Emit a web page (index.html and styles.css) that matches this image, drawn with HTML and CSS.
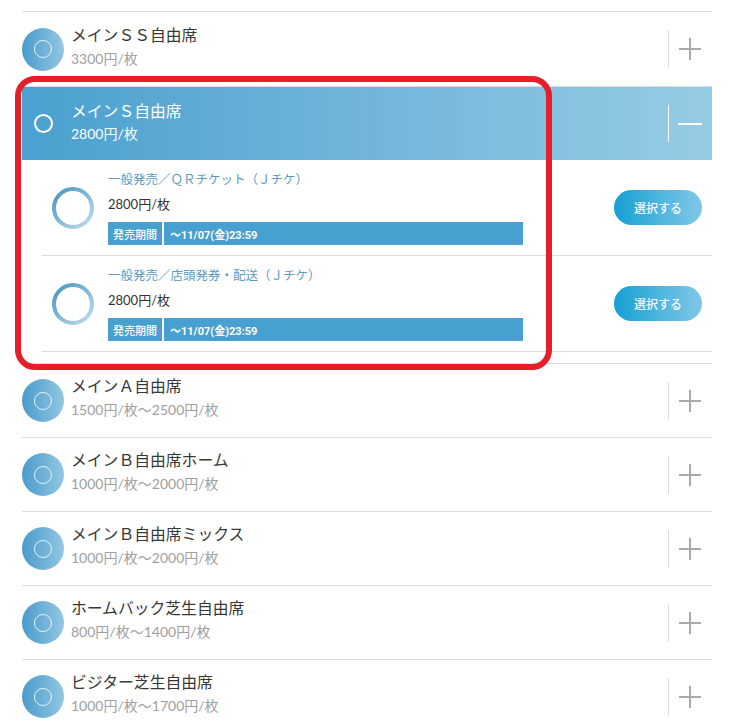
FILE: index.html
```html
<!DOCTYPE html>
<html lang="ja">
<head>
<meta charset="utf-8">
<link rel="stylesheet" href="styles.css">
</head>
<body>
<div class="list">
  <div class="row first">
    <div class="badge"><span class="badge-ring"></span></div>
    <div class="info"><div class="name">メインＳＳ自由席</div><div class="price">3300円/枚</div></div>
    <div class="toggle"><span class="sep"></span><svg class="icon" width="24" height="24" viewBox="0 0 24 24"><path d="M12 1v22M1 12h22" stroke="#a9a9a9" stroke-width="2" fill="none"/></svg></div>
  </div>

  <div class="group">
    <div class="group-head">
      <div class="badge open"><span class="badge-ring"></span></div>
      <div class="info"><div class="name">メインＳ自由席</div><div class="price">2800円/枚</div></div>
      <div class="toggle"><span class="sep"></span><svg class="icon" width="24" height="24" viewBox="0 0 24 24"><path d="M0 12h24" stroke="#ffffff" stroke-width="2" fill="none"/></svg></div>
    </div>
    <div class="tickets">
      <div class="ticket">
        <svg class="ring" width="42" height="42" viewBox="0 0 42 42"><defs><linearGradient id="rg1" x1="0" y1="0" x2="1" y2="1"><stop offset="0" stop-color="#4793c0"/><stop offset="1" stop-color="#c0deee"/></linearGradient></defs><circle cx="21" cy="21" r="19" fill="none" stroke="url(#rg1)" stroke-width="4"/></svg>
        <div class="t-info">
          <div class="t-name">一般発売／ＱＲチケット（Ｊチケ）</div>
          <div class="t-price">2800円/枚</div>
          <div class="period"><span class="p-label">発売期間</span><span class="p-value">〜11/07(金)23:59</span></div>
        </div>
        <button class="select">選択する</button>
      </div>
      <div class="ticket">
        <svg class="ring" width="42" height="42" viewBox="0 0 42 42"><defs><linearGradient id="rg2" x1="0" y1="0" x2="1" y2="1"><stop offset="0" stop-color="#4793c0"/><stop offset="1" stop-color="#c0deee"/></linearGradient></defs><circle cx="21" cy="21" r="19" fill="none" stroke="url(#rg2)" stroke-width="4"/></svg>
        <div class="t-info">
          <div class="t-name">一般発売／店頭発券・配送（Ｊチケ）</div>
          <div class="t-price">2800円/枚</div>
          <div class="period"><span class="p-label">発売期間</span><span class="p-value">〜11/07(金)23:59</span></div>
        </div>
        <button class="select">選択する</button>
      </div>
    </div>
  </div>

  <div class="row">
    <div class="badge"><span class="badge-ring"></span></div>
    <div class="info"><div class="name">メインＡ自由席</div><div class="price">1500円/枚～2500円/枚</div></div>
    <div class="toggle"><span class="sep"></span><svg class="icon" width="24" height="24" viewBox="0 0 24 24"><path d="M12 1v22M1 12h22" stroke="#a9a9a9" stroke-width="2" fill="none"/></svg></div>
  </div>
  <div class="row">
    <div class="badge"><span class="badge-ring"></span></div>
    <div class="info"><div class="name">メインＢ自由席ホーム</div><div class="price">1000円/枚～2000円/枚</div></div>
    <div class="toggle"><span class="sep"></span><svg class="icon" width="24" height="24" viewBox="0 0 24 24"><path d="M12 1v22M1 12h22" stroke="#a9a9a9" stroke-width="2" fill="none"/></svg></div>
  </div>
  <div class="row">
    <div class="badge"><span class="badge-ring"></span></div>
    <div class="info"><div class="name">メインＢ自由席ミックス</div><div class="price">1000円/枚～2000円/枚</div></div>
    <div class="toggle"><span class="sep"></span><svg class="icon" width="24" height="24" viewBox="0 0 24 24"><path d="M12 1v22M1 12h22" stroke="#a9a9a9" stroke-width="2" fill="none"/></svg></div>
  </div>
  <div class="row">
    <div class="badge"><span class="badge-ring"></span></div>
    <div class="info"><div class="name">ホームバック芝生自由席</div><div class="price">800円/枚～1400円/枚</div></div>
    <div class="toggle"><span class="sep"></span><svg class="icon" width="24" height="24" viewBox="0 0 24 24"><path d="M12 1v22M1 12h22" stroke="#a9a9a9" stroke-width="2" fill="none"/></svg></div>
  </div>
  <div class="row">
    <div class="badge"><span class="badge-ring"></span></div>
    <div class="info"><div class="name">ビジター芝生自由席</div><div class="price">1000円/枚～1700円/枚</div></div>
    <div class="toggle"><span class="sep"></span><svg class="icon" width="24" height="24" viewBox="0 0 24 24"><path d="M12 1v22M1 12h22" stroke="#a9a9a9" stroke-width="2" fill="none"/></svg></div>
  </div>
</div>
<div class="highlight"></div>
</body>
</html>
```

FILE: styles.css
```css
html, body {
  margin: 0;
  padding: 0;
  background: #ffffff;
  overflow: hidden;
}
body {
  position: relative;
  width: 731px;
  height: 721px;
  font-family: Lato, "Noto Sans CJK JP", sans-serif;
  color: #333333;
}
.list {
  margin: 11px 0 0 22px;
  width: 690px;
}
.row {
  display: flex;
  align-items: center;
  height: 73px;
  border-top: 1px solid #dddddd;
  padding-right: 10px;
}
.row.first {
  height: 74px;
}
.badge {
  width: 42px;
  height: 43px;
  border-radius: 50%;
  background: linear-gradient(90deg, #4a9bcb, #93c7e2);
  display: flex;
  align-items: center;
  justify-content: center;
  flex: none;
}
.badge-ring {
  width: 16px;
  height: 16px;
  border-radius: 50%;
  border: 1.5px solid #e2f5fc;
}
.badge.open {
  background: transparent;
}
.badge.open .badge-ring {
  width: 15px;
  height: 15px;
  border: 2px solid #ffffff;
}
.info {
  flex: 1;
  margin-left: 7px;
  margin-top: -5px;
}
.name {
  font-size: 15.8px;
  line-height: 24px;
  color: #383838;
  white-space: nowrap;
}
.price {
  font-size: 14px;
  line-height: 24px;
  color: #a0a0a0;
  white-space: nowrap;
}
.toggle {
  display: flex;
  align-items: center;
  flex: none;
}
.sep {
  width: 1px;
  height: 38px;
  background: #dddddd;
  margin-right: 9px;
}
.icon {
  display: block;
}
.group {
  border-top: 1px solid #dddddd;
  padding-bottom: 11px;
}
.group-head {
  display: flex;
  align-items: center;
  height: 73px;
  padding-right: 10px;
  background: linear-gradient(90deg, #4aa0cf, #97cbe4);
}
.group-head .name,
.group-head .price {
  color: #ffffff;
  line-height: 23px;
}
.group-head .info {
  margin-top: -4px;
}
.group-head .sep {
  background: #ffffff;
  height: 37px;
}
.tickets {
  margin-left: 20px;
}
.ticket {
  display: flex;
  align-items: center;
  height: 95px;
  border-bottom: 1px solid #dddddd;
  padding: 0 10px;
}
.ring {
  display: block;
  flex: none;
}
.t-info {
  width: 415px;
  margin-left: 14px;
  padding-top: 1px;
}
.t-name {
  font-size: 12.5px;
  line-height: 18px;
  color: #5a9cc5;
  white-space: nowrap;
}
.t-price {
  font-size: 13px;
  line-height: 18px;
  color: #333333;
  margin-top: 6px;
}
.period {
  display: flex;
  height: 23px;
  margin-top: 9px;
  gap: 2px;
}
.p-label,
.p-value {
  display: flex;
  align-items: center;
  background: #47a0cf;
  color: #ffffff;
  font-size: 11px;
  font-weight: 700;
}
.p-label {
  width: 54px;
  justify-content: center;
  font-weight: 500;
}
.p-value {
  flex: 1;
  padding-left: 6px;
  font-family: Roboto, "Noto Sans CJK JP", sans-serif;
}
.select {
  margin-left: auto;
  width: 88px;
  height: 35px;
  border: none;
  border-radius: 18px;
  background: linear-gradient(90deg, #17a0d4, #82c7e6);
  color: #f4fbff;
  font-family: "Noto Sans CJK JP", sans-serif;
  font-size: 12px;
  font-weight: 500;
  padding: 0;
}
.highlight {
  position: absolute;
  left: 15px;
  top: 76px;
  width: 537px;
  height: 294px;
  box-sizing: border-box;
  border: 6px solid #e3202a;
  border-radius: 20px;
  pointer-events: none;
}
```
